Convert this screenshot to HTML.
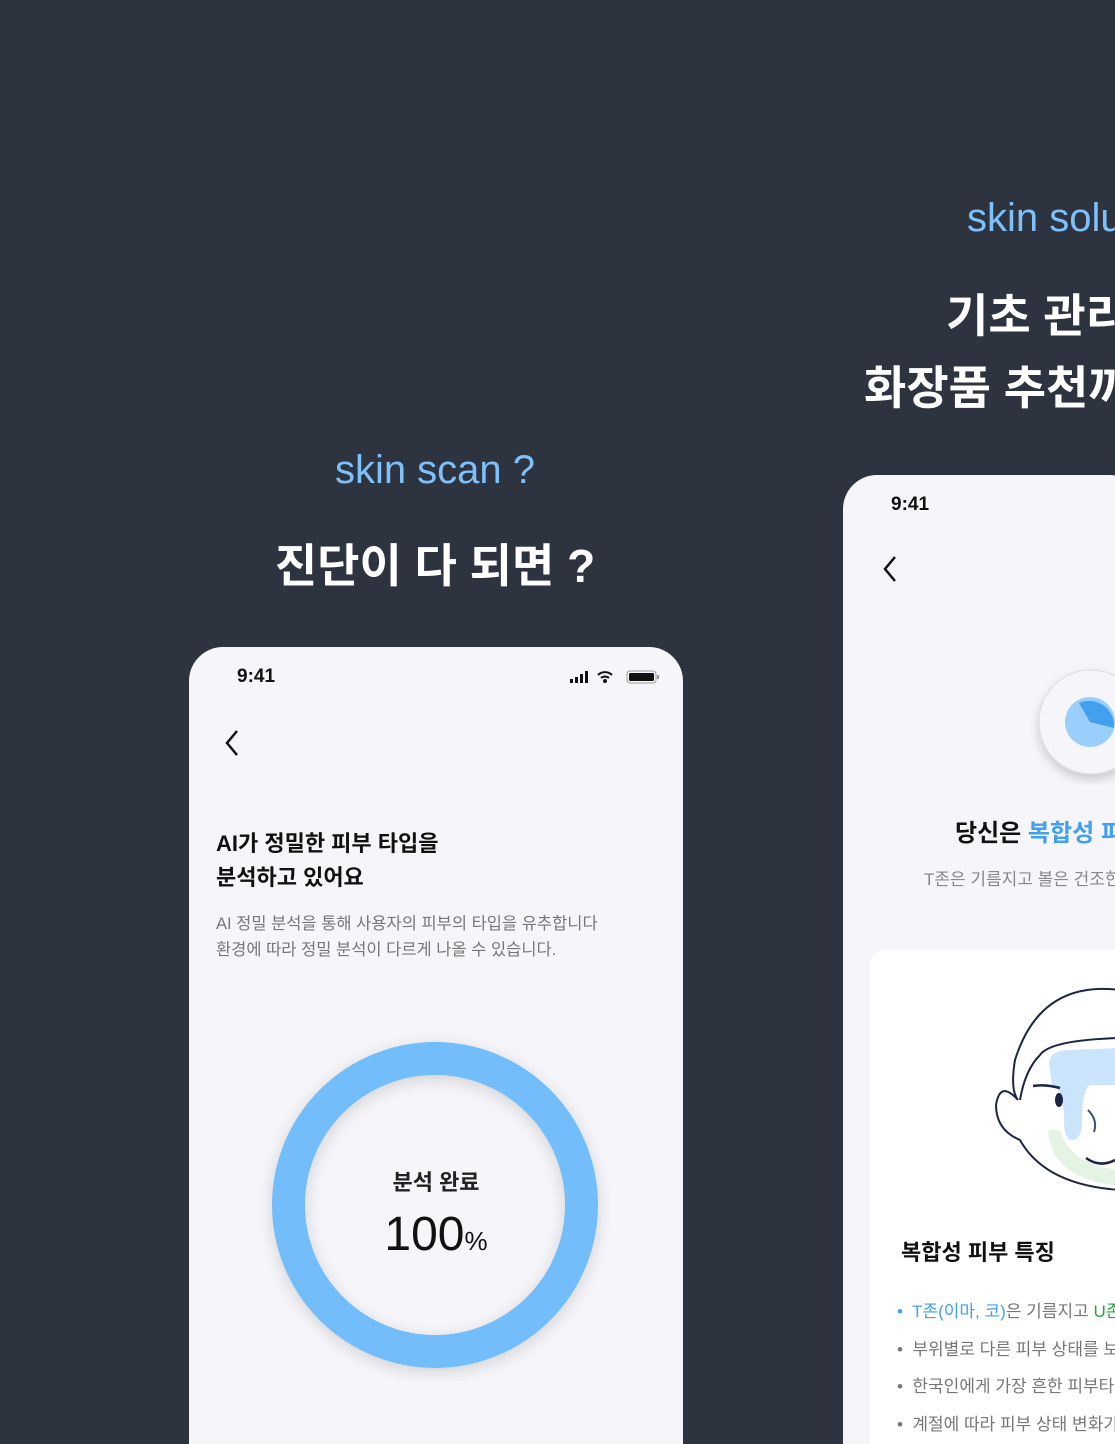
<!DOCTYPE html>
<html><head><meta charset="utf-8"><style>
*{margin:0;padding:0;box-sizing:border-box}
html{overflow:hidden;width:1115px;height:1444px}
body{width:1115px;height:1444px;background:#2e3340;position:relative;overflow:hidden;font-family:"Liberation Sans","Noto Sans CJK KR",sans-serif}
.a{position:absolute;white-space:nowrap}
.phone{position:absolute;background:#f6f6fa;border-radius:34px 34px 0 0;overflow:hidden}
</style></head><body>
<div class="a" style="left:967px;top:196px;font-size:40px;color:#7dc0fa">skin solu</div>
<div class="a" style="left:946px;top:280px;font-size:46px;color:#fff;font-weight:bold">기초 관리</div>
<div class="a" style="left:864px;top:352px;font-size:46px;color:#fff;font-weight:bold">화장품 추천까</div>
<div class="a" style="left:0;width:870px;text-align:center;top:448px;font-size:40px;color:#7dc0fa">skin scan ?</div>
<div class="a" style="left:0;width:870px;text-align:center;top:530px;font-size:46px;color:#fff;font-weight:bold">진단이 다 되면 ?</div>

<div class="phone" style="left:189px;top:647px;width:494px;height:797px">
 <div class="a" style="left:48px;top:19px;font-size:19px;font-weight:bold;color:#111">9:41</div>
 <svg class="a" style="left:380px;top:22px" width="92" height="18">
  <rect x="1" y="10" width="3" height="4" fill="#111"/><rect x="6" y="8" width="3" height="6" fill="#111"/><rect x="11" y="5" width="3" height="9" fill="#111"/><rect x="16" y="2" width="3" height="12" fill="#111"/>
  <path d="M29 6a10 10 0 0 1 14 0M32 9a6 6 0 0 1 8 0" stroke="#111" stroke-width="2" fill="none"/><circle cx="36" cy="12" r="2" fill="#111"/>
  <rect x="58" y="2" width="29" height="12" rx="3" fill="none" stroke="#999"/><rect x="60" y="4" width="25" height="8" rx="1.5" fill="#111"/><rect x="88" y="6" width="2" height="4" fill="#999"/>
 </svg>
 <svg class="a" style="left:34px;top:82px" width="20" height="28"><path d="M14 2 L4 14 L14 26" stroke="#111" stroke-width="2.5" fill="none"/></svg>
 <div class="a" style="left:27px;top:180px;font-size:22px;font-weight:bold;color:#111;line-height:34px">AI가 정밀한 피부 타입을<br>분석하고 있어요</div>
 <div class="a" style="left:27px;top:264px;font-size:16.5px;color:#777;line-height:26px">AI 정밀 분석을 통해 사용자의 피부의 타입을 유추합니다<br>환경에 따라 정밀 분석이 다르게 나올 수 있습니다.</div>
 <svg class="a" style="left:66px;top:376px" width="360" height="360"><defs><filter id="s"><feDropShadow dx="0" dy="4" stdDeviation="8" flood-opacity=".15"/></filter></defs>
  <circle cx="180" cy="182" r="146.5" fill="none" stroke="#72bdfa" stroke-width="33" filter="url(#s)"/></svg>
 <div class="a" style="left:0;width:494px;text-align:center;top:518px;font-size:22px;font-weight:bold;color:#222">분석 완료</div>
 <div class="a" style="left:0;width:494px;text-align:center;top:560px;font-size:48px;color:#111">100<span style="font-size:26px">%</span></div>
</div>

<div class="phone" style="left:843px;top:475px;width:300px;height:969px">
 <div class="a" style="left:48px;top:19px;font-size:19px;font-weight:bold;color:#111">9:41</div>
 <svg class="a" style="left:38px;top:80px" width="20" height="28"><path d="M14 2 L4 14 L14 26" stroke="#111" stroke-width="2.5" fill="none"/></svg>
 <svg class="a" style="left:180px;top:180px" width="120" height="140"><defs><filter id="t"><feDropShadow dx="0" dy="5" stdDeviation="5" flood-opacity=".18"/></filter></defs>
  <circle cx="68" cy="67" r="52" fill="#f6f6fa" stroke="#ddd" filter="url(#t)"/>
  <circle cx="67" cy="67" r="25" fill="#9acffc"/><path d="M67 67 L56 48 A25 25 0 0 1 91 73 Z" fill="#42a0ef"/></svg>
 <div class="a" style="left:112px;top:338px;font-size:24px;font-weight:bold;color:#111">당신은 <span style="color:#42a0ef">복합성 피</span></div>
 <div class="a" style="left:81px;top:390px;font-size:17px;color:#888">T존은 기름지고 볼은 건조한</div>
 <div class="a" style="left:27px;top:475px;width:273px;height:500px;background:#fff;border-radius:14px 14px 0 0;overflow:hidden">
  <svg class="a" style="left:120px;top:30px" width="130" height="220">
   <path d="M60 90 Q55 70 80 70 L130 68 L130 105 L100 105 Q92 110 92 140 Q92 160 82 160 Q74 160 74 140 Q74 110 62 105 Z" fill="#c9e4fb"/>
   <path d="M58 150 Q60 195 120 205 L130 205 L130 190 Q80 185 70 150 Z" fill="#e4f3e4"/>
   <path d="M130 10 Q50 0 25 80 Q20 110 28 120 Q10 100 6 125 Q6 150 30 160 Q55 205 130 210" fill="none" stroke="#1d2545" stroke-width="2"/>
   <path d="M30 120 Q35 90 50 75 Q60 60 130 58" fill="none" stroke="#1d2545" stroke-width="2"/>
   <path d="M43 106 Q55 104 70 108" stroke="#1d2545" stroke-width="2.5" fill="none"/>
   <ellipse cx="69" cy="120" rx="4" ry="7" fill="#1d2545"/>
   <path d="M98 130 Q108 140 104 152" stroke="#3b5275" stroke-width="2" fill="none"/>
   <path d="M96 178 Q110 188 125 180" stroke="#1d2545" stroke-width="2.5" fill="none"/>
  </svg>
  <div class="a" style="left:31px;top:285px;font-size:22px;font-weight:bold;color:#111">복합성 피부 특징</div>
  <div class="a" style="left:27px;top:343px;font-size:17px;color:#777;line-height:37.5px">
   <span style="color:#42a0ef">•&nbsp; T존(이마, 코)</span>은 기름지고 <span style="color:#2aa33a">U존</span><br>•&nbsp; 부위별로 다른 피부 상태를 보<br>•&nbsp; 한국인에게 가장 흔한 피부타<br>•&nbsp; 계절에 따라 피부 상태 변화가</div>
 </div>
</div>
</body></html>
